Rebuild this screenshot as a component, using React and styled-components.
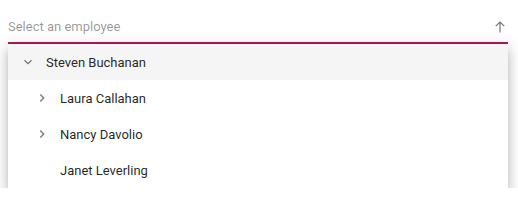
import React from "react";
import styled, { createGlobalStyle } from "styled-components";

const Global = createGlobalStyle`
  html, body { margin: 0; padding: 0; background: #fff; }
  body { font-family: Roboto, "Noto Sans", sans-serif; }
`;

const Page = styled.div`
  padding: 12px 10px 0 8px;
`;

const Field = styled.div`
  width: 500px;
  display: flex;
  flex-direction: column;
`;

const InputRow = styled.div`
  height: 30px;
  display: flex;
  align-items: center;
  border-bottom: 2px solid #b3185a;
`;

const Placeholder = styled.span`
  flex: 1;
  font-size: 13px;
  color: rgba(0, 0, 0, 0.42);
  line-height: 30px;
`;

const ArrowBox = styled.span`
  width: 16px;
  height: 16px;
  margin-right: 0;
  display: flex;
  align-items: center;
  justify-content: center;
`;

const Popup = styled.div`
  background: #fff;
  box-shadow: 0 5px 5px -3px rgba(0, 0, 0, 0.2), 0 8px 10px 1px rgba(0, 0, 0, 0.14),
    0 3px 14px 2px rgba(0, 0, 0, 0.12);
  display: flex;
  flex-direction: column;
`;

const Row = styled.div`
  height: 36px;
  display: flex;
  align-items: center;
  padding-left: ${(p) => p.$indent}px;
  background: ${(p) => (p.$active ? "#f5f5f5" : "#fff")};
`;

const Toggle = styled.span`
  width: 20px;
  height: 20px;
  display: flex;
  align-items: center;
  justify-content: center;
  margin-right: 8px;
`;

const Label = styled.span`
  font-size: 13px;
  color: rgba(0, 0, 0, 0.87);
`;

const Chevron = ({ down }) => (
  <svg width="12" height="12" viewBox="0 0 12 12">
    {down ? (
      <path d="M2.5 4.2 L6 7.6 L9.5 4.2" fill="none" stroke="#757575" strokeWidth="1.3" />
    ) : (
      <path d="M4.3 2.5 L7.7 6 L4.3 9.5" fill="none" stroke="#757575" strokeWidth="1.3" />
    )}
  </svg>
);

const ArrowUp = () => (
  <svg width="12" height="12" viewBox="0 0 12 12">
    <path d="M6 11.5 V1.2 M1.8 5.2 L6 1 L10.2 5.2" fill="none" stroke="#757575" strokeWidth="1.2" />
  </svg>
);

const items = [
  { name: "Steven Buchanan", indent: 10, icon: "down", active: true },
  { name: "Laura Callahan", indent: 24, icon: "right" },
  { name: "Nancy Davolio", indent: 24, icon: "right" },
  { name: "Janet Leverling", indent: 24, icon: null },
];

export default function App() {
  return (
    <Page>
      <Global />
      <Field>
        <InputRow>
          <Placeholder>Select an employee</Placeholder>
          <ArrowBox>
            <ArrowUp />
          </ArrowBox>
        </InputRow>
        <Popup>
          {items.map((it) => (
            <Row key={it.name} $indent={it.indent} $active={it.active}>
              <Toggle>{it.icon && <Chevron down={it.icon === "down"} />}</Toggle>
              <Label>{it.name}</Label>
            </Row>
          ))}
        </Popup>
      </Field>
    </Page>
  );
}
